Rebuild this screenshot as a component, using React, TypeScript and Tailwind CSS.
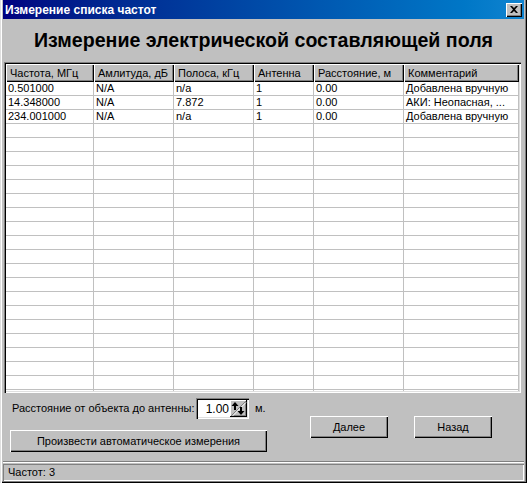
import React from 'react';

const FONT = { fontFamily: '"Liberation Sans", Arial, sans-serif' };

const columns = [
  { title: 'Частота, МГц', w: 88 },
  { title: 'Амлитуда, дБ', w: 80 },
  { title: 'Полоса, кГц', w: 80 },
  { title: 'Антенна', w: 60 },
  { title: 'Расстояние, м', w: 90 },
  { title: 'Комментарий', w: 115 },
];

const rows = [
  ['0.501000', 'N/A', 'n/a', '1', '0.00', 'Добавлена вручную'],
  ['14.348000', 'N/A', '7.872', '1', '0.00', 'АКИ: Неопасная, ...'],
  ['234.001000', 'N/A', 'n/a', '1', '0.00', 'Добавлена вручную'],
];

const EMPTY_ROWS = 25;

// classic raised 3d button edges
const raised =
  'bg-[#c0c0c0] shadow-[inset_1px_1px_#fff,inset_-1px_-1px_#000,inset_-2px_-2px_#808080]';
const sunken =
  'shadow-[inset_1px_1px_#808080,inset_2px_2px_#000,inset_-1px_-1px_#fff,inset_-2px_-2px_#dfdfdf]';

function SpinGlyph() {
  return (
    <svg width="17" height="17" viewBox="0 0 17 17" className="block">
      <rect x="0" y="0" width="17" height="17" fill="#c0c0c0" />
      <path d="M0 0.5H16.5M0.5 0V17" stroke="#fff" />
      <path d="M0 16.5H17M16.5 0V17" stroke="#000" />
      <path d="M1 15.5H16M15.5 1V16" stroke="#808080" />
      <path d="M1.5 15.5L15.5 1.5" stroke="#808080" />
      <path d="M2.5 16L16 2.5" stroke="#fff" />
      {/* up arrow */}
      <path d="M5 2L1.5 6H8.5Z" fill="#000" />
      <rect x="4" y="6" width="2" height="4" fill="#000" />
      {/* down arrow */}
      <rect x="10" y="7" width="2" height="4" fill="#000" />
      <path d="M11 15L7.5 11H14.5Z" fill="#000" />
    </svg>
  );
}

function Win98Button({ label, className }: { label: string; className: string }) {
  return (
    <button className={`${raised} ${className} flex items-center justify-center text-[11px] text-black`}>
      {label}
    </button>
  );
}

export default function App() {
  return (
    <div style={FONT} className="w-[527px] h-[483px] bg-[#c0c0c0] overflow-hidden">
      <div className="w-[527px] h-[483px] flex flex-col px-[3px] pb-[3px] shadow-[inset_1px_0_#dfdfdf,inset_2px_0_#fff,inset_-1px_-1px_#000,inset_-2px_-2px_#808080]">
        {/* title bar */}
        <div className="h-[19px] shrink-0 flex items-center justify-between bg-gradient-to-r from-[#000080] to-[#1084d0] pl-[2px] pr-[2px]">
          <span className="text-white font-bold text-[12px] leading-none">Измерение списка частот</span>
          <div className={`${raised} w-[16px] h-[14px] flex items-center justify-center`}>
            <svg width="8" height="7" viewBox="0 0 8 7">
              <path d="M0 0H2L4 2L6 0H8L5 3.5L8 7H6L4 5L2 7H0L3 3.5Z" fill="#000" />
            </svg>
          </div>
        </div>

        {/* heading */}
        <div className="h-[43px] shrink-0 flex items-center justify-center">
          <h1 className="text-[19.6px] font-bold text-black leading-none">
            Измерение электрической составляющей поля
          </h1>
        </div>

        {/* grid */}
        <div className={`ml-[1px] w-[517px] h-[331px] shrink-0 bg-white p-[2px] ${sunken}`}>
          <div className="w-[513px] h-[327px] overflow-hidden">
            <div className="flex h-[18px]">
              {columns.map((c) => (
                <div
                  key={c.title}
                  style={{ width: c.w }}
                  className="shrink-0 h-[18px] bg-[#c0c0c0] pl-[4px] flex items-center text-[11px] text-black whitespace-nowrap shadow-[inset_1px_1px_#fff,inset_-1px_-1px_#000,inset_-2px_-2px_#808080]"
                >
                  {c.title}
                </div>
              ))}
            </div>
            {Array.from({ length: EMPTY_ROWS }).map((_, r) => (
              <div key={r} className="flex h-[14px]">
                {columns.map((c, i) => (
                  <div
                    key={i}
                    style={{ width: c.w }}
                    className="shrink-0 h-[14px] border-r border-b border-[#c0c0c0] pl-[2px] flex items-center text-[11px] text-black whitespace-nowrap overflow-hidden"
                  >
                    {rows[r]?.[i] ?? ''}
                  </div>
                ))}
              </div>
            ))}
          </div>
        </div>

        {/* bottom panel */}
        <div className="h-[69px] shrink-0 flex border-b border-[#808080] shadow-[0_1px_#fff]">
          <div className="w-[265px] shrink-0 flex flex-col">
            <div className="flex items-center h-[21px] mt-[5px] pl-[9px]">
              <span className="w-[184px] shrink-0 text-[11px] text-black whitespace-nowrap">
                Расстояние от объекта до антенны:
              </span>
              <div className={`w-[53px] h-[21px] shrink-0 bg-white flex items-center justify-end p-[2px] ${sunken}`}>
                <span className="text-[12px] text-black pr-[1px]">1.00</span>
                <SpinGlyph />
              </div>
              <span className="ml-[6px] text-[11px] text-black">м.</span>
            </div>
            <Win98Button label="Произвести автоматическое измерения" className="mt-[11px] ml-[7px] w-[257px] h-[22px]" />
          </div>
          <div className="flex pt-[23px]">
            <Win98Button label="Далее" className="ml-[42px] w-[78px] h-[22px]" />
            <Win98Button label="Назад" className="ml-[26px] w-[78px] h-[22px]" />
          </div>
        </div>

        {/* status bar */}
        <div className="mt-[2px] h-[17px] shrink-0 flex items-center pl-[5px] shadow-[inset_1px_1px_#808080,inset_-1px_-1px_#fff]">
          <span className="text-[11px] text-black">Частот: 3</span>
        </div>
      </div>
    </div>
  );
}
